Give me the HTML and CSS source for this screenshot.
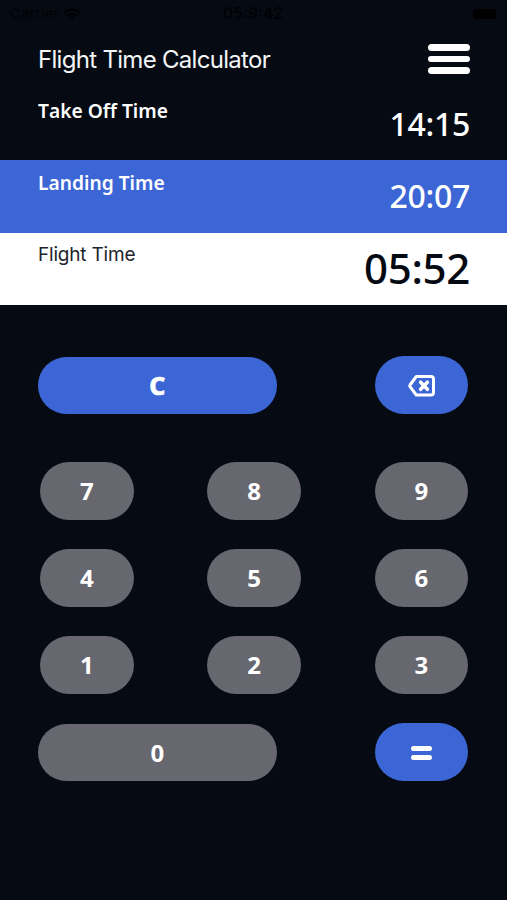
FILE: index.html
```html
<!DOCTYPE html>
<html lang="en">
<head>
<meta charset="utf-8">
<title>Flight Time Calculator</title>
<link rel="stylesheet" href="styles.css">
</head>
<body>
<main class="app">
  <div class="status">
    <div class="carrier"><span>Carrier</span>
      <svg width="18" height="13" viewBox="0 0 18 13" fill="none" stroke="currentColor" stroke-width="2.4"><path d="M1 4.8Q9-2 17 4.8M4 8Q9 3.6 14 8"/><path d="M6.5 9.5Q9 7.5 11.5 9.5L9 12.5Z" fill="currentColor" stroke="none"/></svg>
    </div>
    <span class="clock">05:9:42</span>
    <span class="battery"></span>
  </div>
  <header class="header">
    <h1 class="title">Flight Time Calculator</h1>
    <button class="menu" aria-label="Menu"><i></i><i></i><i></i></button>
  </header>
  <section class="row takeoff"><span class="label">Take Off Time</span><span class="value">14:15</span></section>
  <section class="row landing"><span class="label">Landing Time</span><span class="value">20:07</span></section>
  <section class="row flight"><span class="label">Flight Time</span><span class="value">05:52</span></section>
  <section class="keypad">
    <div class="keys top">
      <button class="key wide blue clear">C</button>
      <button class="key blue" aria-label="Delete">
        <svg class="delete" width="28" height="24" viewBox="0 0 28 24" fill="none" stroke="#fff" stroke-linecap="round" stroke-linejoin="round"><path d="M8.3 2.5H23Q25.5 2.5 25.5 5V18.5Q25.5 21 23 21H8.3L2 12.6Q1.5 11.8 2 11Z" stroke-width="3"/><path d="M12.6 8.2L19.4 15.3M19.4 8.2L12.6 15.3" stroke-width="3.6"/></svg>
      </button>
    </div>
    <div class="keys"><button class="key">7</button><button class="key">8</button><button class="key">9</button></div>
    <div class="keys"><button class="key">4</button><button class="key">5</button><button class="key">6</button></div>
    <div class="keys"><button class="key">1</button><button class="key">2</button><button class="key">3</button></div>
    <div class="keys last">
      <button class="key wide">0</button>
      <button class="key blue" aria-label="Equals"><span class="equals"><i></i><i></i></span></button>
    </div>
  </section>
</main>
</body>
</html>
```
FILE: styles.css
```css
* { box-sizing: border-box; }
body { margin: 0; background: #060b13; color: #fff; font-family: "Noto Sans", "Open Sans", sans-serif; }
button { border: 0; padding: 0; color: inherit; font: inherit; }
.app { display: flex; flex-direction: column; height: 900px; overflow: hidden; }
.status {
  display: grid; grid-template-columns: 1fr auto 1fr; align-items: center;
  height: 28px; padding: 0 11px 0 10px; color: #010205;
  font: 15px/28px Inter, sans-serif;
}
.carrier { display: flex; align-items: center; gap: 4px; }
.clock { font-weight: 600; font-size: 15.5px; }
.battery { justify-self: end; width: 23px; height: 10px; border-radius: 3px; background: #000; }
.header {
  display: flex; align-items: center; justify-content: space-between;
  height: 62px; padding: 0 37.5px 0 38px;
}
.title { margin: 0; padding-top: 1px; font: 400 24px/30px Inter, sans-serif; letter-spacing: -0.7px; color: #f4f5f7; }
.menu { display: flex; flex-direction: column; gap: 5px; width: 42px; background: none; }
.menu i { height: 6.5px; border-radius: 3.5px; background: #fff; }
.row { display: flex; justify-content: space-between; align-items: flex-start; padding: 0 37px 0 38px; }
.label { font-size: 19.2px; line-height: 26px; font-weight: 600; font-kerning: none; }
.value { font-size: 32px; line-height: 44px; font-weight: 500; letter-spacing: -0.3px; }
.takeoff { height: 70px; padding-top: 8px; }
.takeoff .value { margin-top: 4px; }
.landing { height: 72.5px; padding-top: 10px; background: #3c66d5; }
.landing .value { margin-top: 4px; }
.flight { height: 72.2px; padding-top: 8px; background: #fff; color: #050a12; }
.flight .label { margin-top: 1px; font: 400 19px/26px Inter, sans-serif; letter-spacing: -0.2px; color: #20242b; }
.flight .value { margin-top: -1px; font-size: 42px; line-height: 56px; }
.keypad { display: flex; flex-direction: column; gap: 29.3px; padding: 51px 39px 0 40px; }
.keys { display: flex; justify-content: space-between; align-items: center; height: 58px; }
.keys.top { margin-bottom: 18.7px; }
.key {
  display: flex; align-items: center; justify-content: center;
  width: 93.5px; height: 58px; border-radius: 29px; background: #67676f;
  font-size: 24px; font-weight: 700; line-height: 32px;
}
.wide { width: 239.5px; height: 57.3px; margin-left: -2.5px; }
.top .wide { position: relative; top: 0.7px; }
.blue { background: #3c66d5; }
.clear { font-size: 25px; font-weight: 800; -webkit-text-stroke: 0.6px #fff; }
.delete { margin: 2px 0 0 2px; }
.last .blue { margin-top: -1px; }
.equals { display: flex; flex-direction: column; gap: 3.4px; width: 20.5px; margin-top: 2px; }
.equals i { height: 5.3px; border-radius: 2.5px; background: #fff; }
```
